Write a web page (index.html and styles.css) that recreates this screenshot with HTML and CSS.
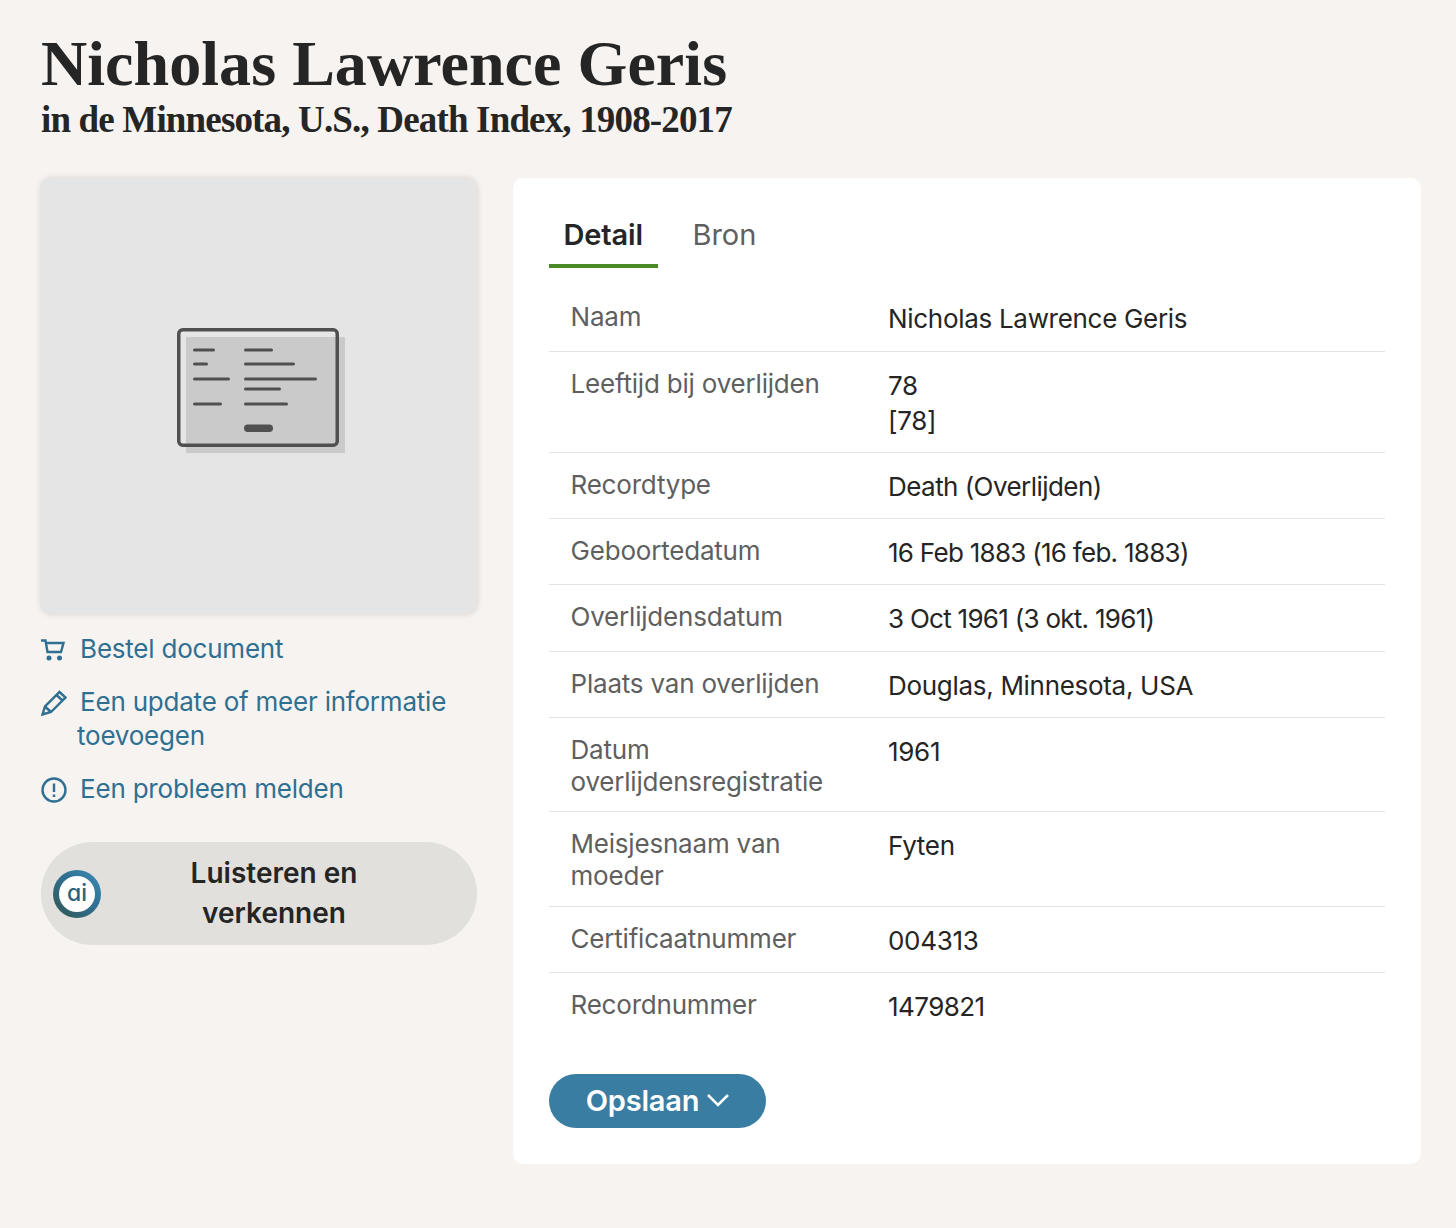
FILE: index.html
```html
<!DOCTYPE html>
<html lang="nl">
<head>
    <meta charset="UTF-8">
    <title>Nicholas Lawrence Geris</title>
    <link rel="stylesheet" href="styles.css">
</head>
<body>
    <header class="page-title">
        <h1>Nicholas Lawrence Geris</h1>
        <h2>in de Minnesota, U.S., Death Index, 1908-2017</h2>
    </header>

    <div class="columns">
        <aside class="side">
            <div class="doc-card">
                <svg class="doc-icon" width="170" height="126" viewBox="0 0 170 126">
                    <rect x="9" y="9" width="159" height="116" fill="#cacaca"/>
                    <rect x="1.750" y="1.750" width="158.500" height="115.500" rx="4" fill="none" stroke="#505050" stroke-width="3.500"/>
                    <g stroke="#505050" stroke-width="3" stroke-linecap="round">
                        <path d="M17.500 22h19M17.500 36h12M17.500 51h34M17.500 76h26"/>
                        <path d="M68.500 22h26M68.500 36h48M68.500 51h70M68.500 61h34M68.500 76h41"/>
                    </g>
                    <rect x="67" y="96.500" width="29" height="7.500" rx="3.750" fill="#505050"/>
                </svg>
            </div>

            <ul class="side-links">
                <li>
                    <svg class="link-icon" width="26" height="26" viewBox="0 0 26 26" fill="none" stroke="#2f7092" stroke-width="2.400">
                        <path d="M0 3.500h4.500l2 11.500h13.500l2.500-9H5"/>
                        <circle cx="8" cy="21" r="2.500" fill="#2f7092" stroke="none"/>
                        <circle cx="18.500" cy="21" r="2.500" fill="#2f7092" stroke="none"/>
                    </svg>
                    <a href="#">Bestel document</a>
                </li>
                <li>
                    <svg class="link-icon" width="26" height="26" viewBox="0 0 26 26" fill="none" stroke="#2f7092" stroke-width="2.400">
                        <path d="M1.500 24.500l2.500-8L18.500 2l6 5.500L10 22zM4 16.500l6 5.500M15.500 5l6 5.500"/>
                    </svg>
                    <a href="#">Een update of meer informatie toevoegen</a>
                </li>
                <li>
                    <svg class="link-icon" width="26" height="26" viewBox="0 0 26 26" fill="none" stroke="#2f7092" stroke-width="2.400">
                        <circle cx="13" cy="13" r="11.500"/>
                        <path d="M13 6.500v8.500M13 17.500v2.500"/>
                    </svg>
                    <a href="#">Een probleem melden</a>
                </li>
            </ul>

            <button class="listen-btn">
                <span class="ai-badge"><span class="ai-badge-inner">ai</span></span>
                <span class="listen-label">Luisteren en verkennen</span>
            </button>
        </aside>

        <main class="panel">
            <nav class="tabs">
                <a class="tab active" href="#">Detail</a>
                <a class="tab" href="#">Bron</a>
            </nav>

            <div class="rows">
                <div class="row"><div class="label">Naam</div><div class="value">Nicholas Lawrence Geris</div></div>
                <div class="row"><div class="label">Leeftijd bij overlijden</div><div class="value">78<br>[78]</div></div>
                <div class="row"><div class="label">Recordtype</div><div class="value tight">Death (Overlijden)</div></div>
                <div class="row"><div class="label">Geboortedatum</div><div class="value dates">16 Feb 1883 (16 feb. 1883)</div></div>
                <div class="row"><div class="label">Overlijdensdatum</div><div class="value dates">3 Oct 1961 (3 okt. 1961)</div></div>
                <div class="row"><div class="label">Plaats van overlijden</div><div class="value">Douglas, Minnesota, USA</div></div>
                <div class="row"><div class="label">Datum overlijdensregistratie</div><div class="value">1961</div></div>
                <div class="row"><div class="label">Meisjesnaam van moeder</div><div class="value">Fyten</div></div>
                <div class="row"><div class="label">Certificaatnummer</div><div class="value">004313</div></div>
                <div class="row"><div class="label">Recordnummer</div><div class="value tight">1479821</div></div>
            </div>

            <button class="save-btn">
                Opslaan
                <svg width="24" height="14" viewBox="0 0 24 14" fill="none" stroke="#fff" stroke-width="2.500">
                    <path d="M2 2l10 10L22 2"/>
                </svg>
            </button>
        </main>
    </div>
</body>
</html>
```

FILE: styles.css
```css
body {
    margin: 0;
    padding: 29px 35px 64px 41px;
    background-color: #f6f3f0;
    color: #252525;
    font-family: Inter, 'Noto Sans', sans-serif;
}
.page-title {
    margin-bottom: 37px;
}
h1 {
    margin: 0;
    font-family: 'Liberation Serif', serif;
    font-size: 64px;
    line-height: 70px;
    font-weight: bold;
    letter-spacing: 0.05px;
}
h2 {
    margin: 0;
    font-family: 'Liberation Serif', serif;
    font-size: 37px;
    line-height: 42px;
    font-weight: bold;
    letter-spacing: -0.84px;
}
.columns {
    display: flex;
    gap: 36px;
    align-items: flex-start;
}
.side {
    width: 436px;
    flex-shrink: 0;
}
.doc-card {
    height: 436px;
    display: flex;
    align-items: center;
    justify-content: center;
    background-color: #e5e5e5;
    border-radius: 10px;
    box-shadow: 0 0 6px rgba(0, 0, 0, 0.15);
}
.doc-icon {
    margin: 0 0 10px 6px;
}
.side-links {
    list-style: none;
    margin: 18px 0 0;
    padding: 0;
    font-size: 26px;
    line-height: 34px;
    letter-spacing: -0.22px;
}
.side-links li {
    margin-bottom: 19px;
    padding-left: 36px;
    padding-right: 20px;
}
.side-links a {
    color: #2f7092;
    text-decoration: none;
}
.link-icon {
    vertical-align: -5px;
    margin-left: -36px;
    margin-right: 6px;
}
.listen-btn {
    display: flex;
    align-items: center;
    width: 100%;
    height: 103px;
    margin-top: 36px;
    padding: 0 12px;
    border: none;
    border-radius: 52px;
    background-color: #e2e0dc;
    color: #252525;
    font-family: inherit;
    font-size: 28px;
    line-height: 40px;
    font-weight: 600;
}
.ai-badge {
    width: 48px;
    height: 48px;
    flex-shrink: 0;
    display: flex;
    align-items: center;
    justify-content: center;
    border-radius: 50%;
    background: linear-gradient(45deg, #33564f, #2f7092 55%, #3f8cb8);
}
.ai-badge-inner {
    width: 36px;
    height: 36px;
    border-radius: 50%;
    background-color: #fff;
    color: #2e6379;
    font-size: 23px;
    line-height: 35px;
    font-weight: 500;
    text-align: center;
    font-feature-settings: 'cv11';
}
.listen-label {
    flex: 1;
    padding: 0 58px 2px 40px;
    text-align: center;
}
.panel {
    flex: 1;
    padding: 36px;
    background-color: #fff;
    border-radius: 10px;
}
.tabs {
    display: flex;
    height: 54px;
}
.tab {
    padding: 0 15px 0 14.5px;
    font-size: 29px;
    line-height: 42px;
    color: #5f5f5f;
    text-decoration: none;
    margin-right: 20px;
}
.tab.active {
    color: #252525;
    font-weight: 600;
    letter-spacing: -0.15px;
    border-bottom: 4px solid #4a8a26;
    height: 50px;
}
.rows {
    margin-top: 17.3px;
}
.row {
    display: flex;
    padding: 16px 0 14.3px;
    border-bottom: 1px solid #e3e3e3;
    font-size: 26px;
}
.row:last-child {
    border-bottom: none;
}
.label {
    width: 280px;
    margin-left: 21.5px;
    margin-right: 37.5px;
    line-height: 31.5px;
    letter-spacing: -0.2px;
    color: #5f5f5f;
}
.value {
    line-height: 35px;
    letter-spacing: -0.3px;
    color: #252525;
}
.value.tight {
    letter-spacing: -0.55px;
}
.value.dates {
    letter-spacing: -0.72px;
}
.save-btn {
    display: flex;
    align-items: center;
    justify-content: center;
    gap: 7px;
    width: 217px;
    height: 54px;
    margin-top: 36px;
    padding: 0 0 2px 1px;
    border: none;
    border-radius: 27px;
    background-color: #3a7da3;
    color: #fff;
    font-family: inherit;
    font-size: 29px;
    font-weight: 600;
    letter-spacing: -0.2px;
}
```
